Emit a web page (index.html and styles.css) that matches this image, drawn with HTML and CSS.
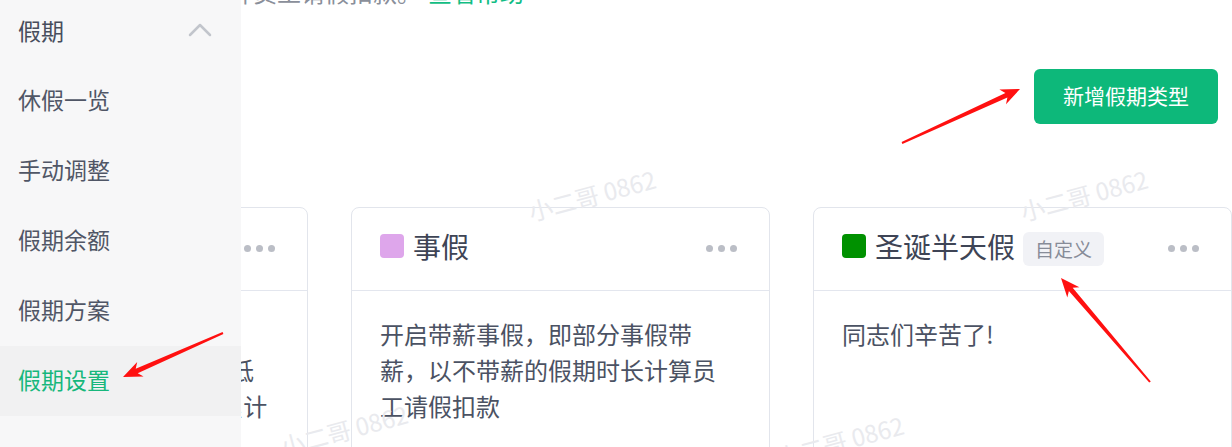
FILE: index.html
```html
<!DOCTYPE html>
<html lang="zh-CN">
<head>
<meta charset="utf-8">
<title>假期设置</title>
<link rel="stylesheet" href="styles.css">
</head>
<body>
<div class="page">
  <main class="content">
    <div class="intro">
      <span class="intro-text">开启后，以不带薪假期时长计算员工请假扣款。</span>
      <a class="help-link">查看帮助</a>
    </div>
    <div class="toolbar">
      <button class="btn-primary" type="button">新增假期类型</button>
    </div>
    <div class="cards">
      <section class="card">
        <header class="card-head">
          <span class="swatch swatch-blue"></span>
          <span class="card-title">年假</span>
          <span class="more"><i></i><i></i><i></i></span>
        </header>
        <div class="card-body">员工入职满一年可享受带薪年假，当年未休完的假期天数不低于5天的，按照实际天数顺延累计</div>
      </section>
      <section class="card">
        <header class="card-head">
          <span class="swatch swatch-purple"></span>
          <span class="card-title">事假</span>
          <span class="more"><i></i><i></i><i></i></span>
        </header>
        <div class="card-body">开启带薪事假，即部分事假带薪，以不带薪的假期时长计算员工请假扣款</div>
      </section>
      <section class="card">
        <header class="card-head">
          <span class="swatch swatch-green"></span>
          <span class="card-title">圣诞半天假</span>
          <span class="tag">自定义</span>
          <span class="more"><i></i><i></i><i></i></span>
        </header>
        <div class="card-body">同志们辛苦了!</div>
      </section>
    </div>
  </main>

  <div class="watermark wm-1">小二哥 0862</div>
  <div class="watermark wm-2">小二哥 0862</div>
  <div class="watermark wm-3">小二哥 0862</div>
  <div class="watermark wm-4">小二哥 0862</div>

  <aside class="sidebar">
    <div class="side-head">
      <span>假期</span>
      <svg class="chevron" width="24" height="14" viewBox="0 0 24 14"><polyline points="2,12 12,2 22,12"/></svg>
    </div>
    <ul class="side-list">
      <li class="side-item">休假一览</li>
      <li class="side-item">手动调整</li>
      <li class="side-item">假期余额</li>
      <li class="side-item">假期方案</li>
      <li class="side-item is-active">假期设置</li>
    </ul>
  </aside>

  <svg class="annotations" width="1232" height="447" viewBox="0 0 1232 447">
    <polygon points="902.4,143.9 1007.4,97.5 1006.0,104.2 1020,89 999.4,89.6 1005.4,92.9 901.6,142.1"/>
    <polygon points="222.6,332.1 135.7,368.7 137.2,362.0 123,377 143.6,376.6 137.7,373.3 223.4,333.9"/>
    <polygon points="1150.8,381.4 1072.7,287.8 1079.4,287.2 1061,278 1067.3,297.6 1068.9,291.0 1149.2,382.6"/>
  </svg>
</div>
</body>
</html>
```

FILE: styles.css
```css
* { box-sizing: border-box; }

html, body {
  margin: 0;
  padding: 0;
  background: #ffffff;
}

body {
  font-family: "Noto Sans CJK SC", "Noto Sans", sans-serif;
}

.page {
  position: relative;
  width: 1232px;
  height: 447px;
  overflow: hidden;
  background: #ffffff;
}

/* ---------- main content (page is scrolled, left part under sidebar) ---------- */
.content {
  margin-left: -111px;
  width: 1343px;
}

.intro {
  display: flex;
  align-items: center;
  margin-top: -26px;
  padding-left: 28px;
  height: 36px;
  font-size: 24px;
  line-height: 36px;
  white-space: nowrap;
}

.intro-text { color: #8a8f9a; }

.help-link {
  margin-left: 7px;
  color: #12bd84;
  cursor: pointer;
}

.toolbar {
  display: flex;
  justify-content: flex-end;
  margin-top: 59px;
  padding-right: 14px;
}

.btn-primary {
  height: 55px;
  padding: 0 29px 2px;
  border: none;
  border-radius: 6px;
  background: #0db87a;
  color: #ffffff;
  font-family: inherit;
  font-size: 21px;
  line-height: 53px;
  cursor: pointer;
}

.cards {
  display: grid;
  grid-template-columns: repeat(3, 419px);
  column-gap: 43px;
  margin-top: 83px;
}

.card {
  height: 300px;
  border: 1px solid #e2e5ec;
  border-radius: 8px;
  background: #ffffff;
}

.card-head {
  display: flex;
  align-items: center;
  height: 83px;
  padding: 0 32px 6px 28px;
  border-bottom: 1px solid #e3e6ee;
}

.swatch {
  flex: none;
  width: 24px;
  height: 24px;
  border-radius: 4px;
  margin-right: 9px;
}
.swatch-blue { background: #4a90e2; }
.swatch-purple { background: #dea6eb; }
.swatch-green { background: #009100; }

.card-title {
  font-size: 28px;
  line-height: 1;
  color: #3e4455;
  white-space: nowrap;
}

.tag {
  margin-left: 8px;
  margin-top: 6px;
  height: 34px;
  padding: 0 12px;
  border-radius: 6px;
  background: #f1f2f6;
  color: #878c98;
  font-size: 19px;
  line-height: 33px;
  white-space: nowrap;
}

.more {
  display: flex;
  gap: 5px;
  margin-left: auto;
  margin-top: 4px;
}
.more i {
  display: block;
  width: 7px;
  height: 7px;
  border-radius: 50%;
  background: #bbbec6;
}

.card-body {
  padding: 25px 37px 0 28px;
  font-size: 24px;
  line-height: 36px;
  color: #4b5263;
}

/* ---------- watermarks ---------- */
.watermark {
  position: absolute;
  width: 140px;
  height: 32px;
  text-align: center;
  font-size: 24px;
  line-height: 32px;
  color: #e9eaee;
  white-space: nowrap;
  transform: rotate(-15deg);
  pointer-events: none;
}
.wm-1 { left: 522px; top: 179px; }
.wm-2 { left: 1014px; top: 179px; }
.wm-3 { left: 770px; top: 425px; }
.wm-4 { left: 274px; top: 414px; }

/* ---------- sidebar ---------- */
.sidebar {
  position: absolute;
  top: 0;
  left: 0;
  width: 241px;
  height: 100%;
  background: #f7f7f8;
}

.side-head {
  display: flex;
  align-items: center;
  justify-content: space-between;
  height: 64px;
  padding: 0 29px 4px 18px;
  font-size: 23px;
  color: #474d5c;
}

.chevron polyline {
  fill: none;
  stroke: #c2c5cc;
  stroke-width: 2.5;
  stroke-linecap: round;
  stroke-linejoin: round;
}

.side-list {
  list-style: none;
  margin: 2px 0 0;
  padding: 0;
}

.side-item {
  height: 70px;
  padding-left: 18px;
  font-size: 23px;
  line-height: 66px;
  color: #505666;
}

.side-item.is-active {
  background: #f1f1f2;
  color: #17b77c;
}

/* ---------- annotation arrows ---------- */
.annotations {
  position: absolute;
  top: 0;
  left: 0;
  pointer-events: none;
}
.annotations polygon { fill: #ff1010; }
```
